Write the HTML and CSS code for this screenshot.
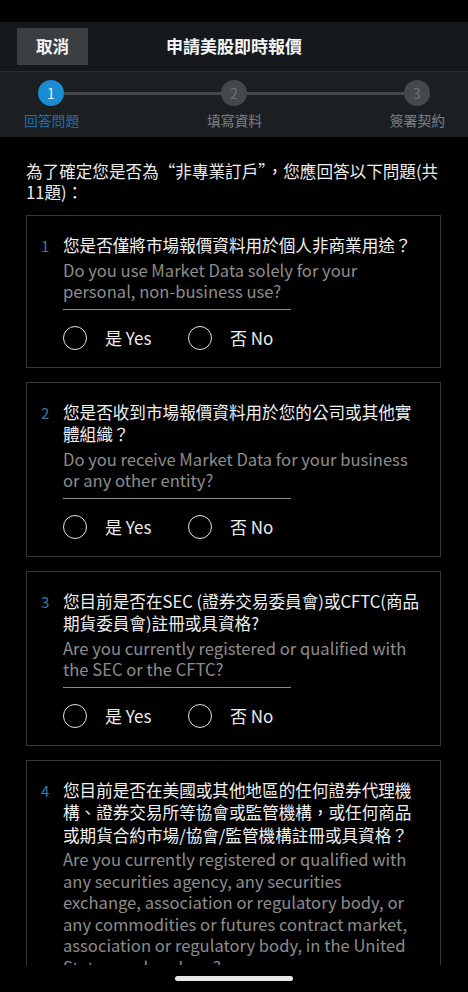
FILE: index.html
```html
<!DOCTYPE html>
<html lang="zh-Hant">
<head>
<meta charset="utf-8">
<title>申請美股即時報價</title>
<link rel="stylesheet" href="styles.css">
</head>
<body>
<div class="phone">
  <div class="statusbar"></div>
  <header class="header">
    <button class="cancel">取消</button>
    <h1 class="title">申請美股即時報價</h1>
  </header>
  <nav class="stepper">
    <div class="track">
      <span class="dot active">1</span>
      <span class="bar"></span>
      <span class="dot">2</span>
      <span class="bar"></span>
      <span class="dot">3</span>
    </div>
    <div class="labels">
      <span class="label active">回答問題</span>
      <span class="label">填寫資料</span>
      <span class="label">簽署契約</span>
    </div>
  </nav>
  <main class="content">
    <p class="intro">為了確定您是否為“非專業訂戶”，您應回答以下問題(共11題)：</p>

    <section class="card">
      <span class="num">1</span>
      <div class="body">
        <p class="zh">您是否僅將市場報價資料用於個人非商業用途？</p>
        <p class="en">Do you use Market Data solely for your personal, non-business use?</p>
        <div class="rule"></div>
        <div class="options">
          <label class="opt"><span class="radio"></span>是 Yes</label>
          <label class="opt"><span class="radio"></span>否 No</label>
        </div>
      </div>
    </section>

    <section class="card">
      <span class="num">2</span>
      <div class="body">
        <p class="zh">您是否收到市場報價資料用於您的公司或其他實體組織？</p>
        <p class="en">Do you receive Market Data for your business or any other entity?</p>
        <div class="rule"></div>
        <div class="options">
          <label class="opt"><span class="radio"></span>是 Yes</label>
          <label class="opt"><span class="radio"></span>否 No</label>
        </div>
      </div>
    </section>

    <section class="card">
      <span class="num">3</span>
      <div class="body">
        <p class="zh">您目前是否在SEC (證券交易委員會)或CFTC(商品期貨委員會)註冊或具資格?</p>
        <p class="en">Are you currently registered or qualified with the SEC or the CFTC?</p>
        <div class="rule"></div>
        <div class="options">
          <label class="opt"><span class="radio"></span>是 Yes</label>
          <label class="opt"><span class="radio"></span>否 No</label>
        </div>
      </div>
    </section>

    <section class="card">
      <span class="num">4</span>
      <div class="body">
        <p class="zh">您目前是否在美國或其他地區的任何證券代理機構、證券交易所等協會或監管機構，或任何商品或期貨合約市場/協會/監管機構註冊或具資格？</p>
        <p class="en">Are you currently registered or qualified with any securities agency, any securities exchange, association or regulatory body, or any commodities or futures contract market, association or regulatory body, in the United States or elsewhere?</p>
        <div class="rule"></div>
        <div class="options">
          <label class="opt"><span class="radio"></span>是 Yes</label>
          <label class="opt"><span class="radio"></span>否 No</label>
        </div>
      </div>
    </section>
  </main>
  <div class="homebar"><span class="indicator"></span></div>
</div>
</body>
</html>
```

FILE: styles.css
```css
* { box-sizing: border-box; }
html, body { margin: 0; padding: 0; background: #000; }
body {
  font-family: "Noto Sans CJK TC", "Noto Sans", sans-serif;
  color: #e6e6e6;
}
.phone {
  width: 468px;
  height: 992px;
  display: flex;
  flex-direction: column;
  overflow: hidden;
  background: #000;
}
.statusbar { height: 22px; flex: none; background: #000; }
.header {
  flex: none;
  height: 50px;
  background: #15191c;
  border-bottom: 1px solid #2a2f33;
  display: flex;
  align-items: center;
  padding: 0 0 0 17px;
}
.cancel {
  width: 71px;
  height: 37px;
  margin-top: -1px;
  background: #3b3f42;
  border: none;
  color: #f2f2f2;
  font-family: inherit;
  font-size: 16.5px;
  font-weight: 700;
  line-height: 37px;
  padding: 0;
}
.title {
  flex: 1;
  margin: -1px 0 0 0;
  padding-right: 88px;
  text-align: center;
  font-size: 17px;
  font-weight: 700;
  color: #f4f4f4;
  line-height: 24px;
}
.stepper {
  flex: none;
  height: 65px;
  background: #1b1f22;
  padding-top: 8px;
}
.track {
  display: flex;
  align-items: center;
  padding: 0 38px;
}
.dot {
  width: 26px;
  height: 26px;
  border-radius: 50%;
  background: #45494c;
  color: #6c7073;
  font-size: 14px;
  line-height: 26px;
  text-align: center;
  flex: none;
}
.dot.active { background: #1b8bd3; color: #e8f3fb; }
.bar { flex: 1; height: 3px; background: #45494c; }
.labels {
  display: flex;
  justify-content: space-between;
  padding: 0 23px 0 24px;
  margin-top: 5px;
}
.label {
  font-size: 13.8px;
  line-height: 18px;
  color: #7c8084;
}
.label.active { color: #1f6fa6; }
.content {
  flex: 1;
  min-height: 0;
  overflow: hidden;
  padding: 24px 27px 0 26px;
}
.intro {
  margin: 0 0 12px 0;
  font-size: 16.6px;
  line-height: 21px;
  color: #ececec;
}
.card {
  border: 1px solid #363636;
  display: flex;
  padding: 18px 18px 17px 14px;
  margin-bottom: 14px;
}
.num {
  width: 22px;
  flex: none;
  font-size: 15px;
  line-height: 23px;
  color: #3a77aa;
}
.body { flex: 1; min-width: 0; }
.zh {
  margin: 0;
  font-size: 16.6px;
  line-height: 22.5px;
  color: #f0f0f0;
}
.en {
  margin: 3px 0 0 0;
  font-size: 16.6px;
  line-height: 21.5px;
  color: #8d8d8d;
}
.rule {
  width: 228px;
  height: 1px;
  background: #8a8a8a;
  margin-top: 6px;
}
.options {
  display: flex;
  margin-top: 16px;
}
.opt {
  display: flex;
  align-items: center;
  width: 125px;
  font-size: 17px;
  line-height: 24px;
  color: #ececec;
}
.radio {
  width: 24px;
  height: 24px;
  border-radius: 50%;
  border: 1.8px solid #e4e4e4;
  margin-right: 18px;
  flex: none;
}
.homebar {
  flex: none;
  height: 27px;
  background: #000;
  display: flex;
  justify-content: center;
  padding-top: 11px;
}
.indicator {
  width: 118px;
  height: 5px;
  border-radius: 3px;
  background: #e6e6e6;
}
```
